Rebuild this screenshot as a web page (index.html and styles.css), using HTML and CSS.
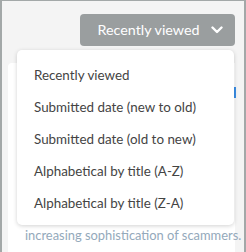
FILE: index.html
```html
<!DOCTYPE html>
<html>
<head>
<meta charset="utf-8">
<link rel="stylesheet" href="styles.css">
</head>
<body>
<div class="page">
  <div class="toolbar">
    <button class="sort-btn">
      <span>Recently viewed</span>
      <svg class="chev" width="12" height="8" viewBox="0 0 12 8"><path d="M1.5 1.5 L6 6 L10.5 1.5" fill="none" stroke="#fff" stroke-width="2.4" stroke-linecap="round" stroke-linejoin="round"/></svg>
    </button>
  </div>
  <div class="card">
    <span class="scroll-mark"></span>
    <p class="excerpt">increasing sophistication of scammers.</p>
  </div>
  <ul class="menu">
    <li>Recently viewed</li>
    <li>Submitted date (new to old)</li>
    <li>Submitted date (old to new)</li>
    <li>Alphabetical by title (A-Z)</li>
    <li>Alphabetical by title (Z-A)</li>
  </ul>
</div>
</body>
</html>
```
FILE: styles.css
```css
html, body {
  margin: 0;
  padding: 0;
}
body {
  width: 246px;
  height: 252px;
  overflow: hidden;
  font-family: Lato, "Open Sans", sans-serif;
}
.page {
  position: relative;
  box-sizing: border-box;
  width: 246px;
  height: 252px;
  background: #f4f4f4;
  border-top: 1px solid #a3a8a8;
  border-left: 2px solid #a3a8a8;
  border-right: 2px solid #a3a8a8;
  overflow: hidden;
}
.toolbar {
  display: flex;
  justify-content: flex-end;
  padding: 13px 9px 0 0;
}
.sort-btn {
  display: flex;
  align-items: center;
  justify-content: center;
  gap: 12px;
  width: 155px;
  height: 32px;
  border: none;
  border-radius: 4px;
  background: #9a9e9f;
  color: #fff;
  font-family: Lato, sans-serif;
  font-size: 14.3px;
  padding: 0 0 1px 6px;
}
.chev {
  margin-top: 1px;
}
.card {
  position: relative;
  margin: 17px 9px 0 6px;
  height: 200px;
  background: #fff;
  border-radius: 4px 0 0 0;
  padding: 0 0 0 17px;
}
.scroll-mark {
  position: absolute;
  right: -1px;
  top: 24px;
  width: 2px;
  height: 11px;
  background: #3a8ee6;
}
.excerpt {
  margin: 0;
  padding-top: 164px;
  font-size: 12.9px;
  line-height: 16px;
  color: #94a9bb;
  white-space: nowrap;
}
.menu {
  position: absolute;
  left: 15px;
  top: 49px;
  width: 217px;
  height: 175px;
  box-sizing: border-box;
  margin: 0;
  padding: 9px 0 0 0;
  list-style: none;
  background: #fff;
  border-radius: 5px;
  box-shadow: 0 1px 4px rgba(0, 0, 0, 0.18);
}
.menu li {
  height: 32px;
  line-height: 32px;
  padding-left: 17px;
  font-size: 13.4px;
  color: #444;
  white-space: nowrap;
}
```
